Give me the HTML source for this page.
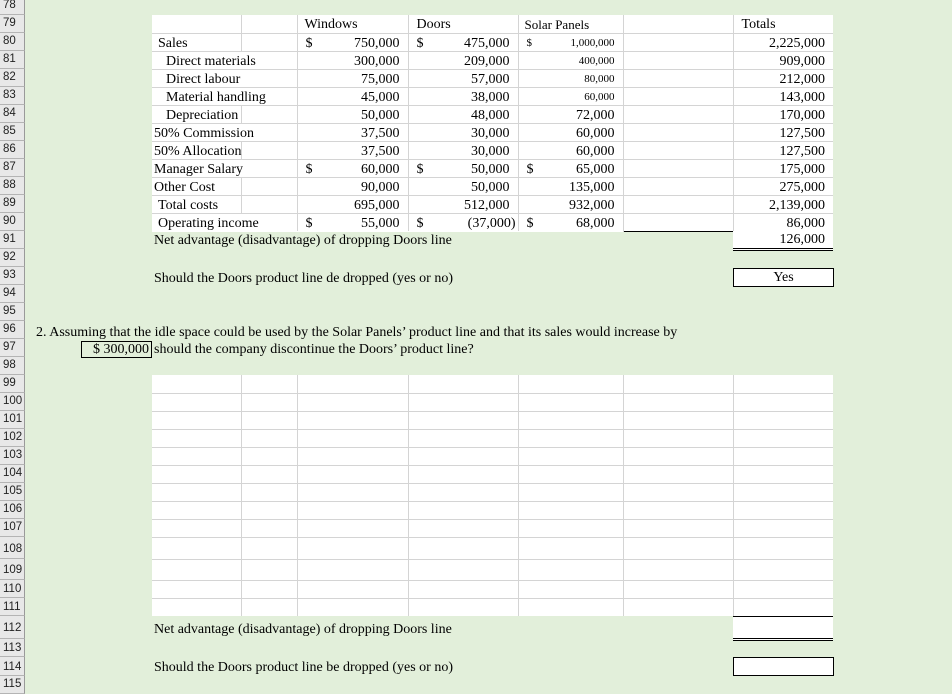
<!DOCTYPE html>
<html><head><meta charset="utf-8"><style>
*{margin:0;padding:0;box-sizing:border-box}
body{width:952px;height:685px;overflow:hidden;background:#e2efda;position:relative;font-family:"Liberation Serif",serif;font-size:14px;color:#000}
.h{position:absolute;left:0;width:25px;background:#e8e8e8;border-bottom:1px solid #b4b4b4;border-right:1px solid #9a9a9a;font-family:"Liberation Sans",sans-serif;font-size:11.5px;text-align:left;padding-left:3px;color:#222}
table{position:absolute;border-collapse:collapse;table-layout:fixed;background:#fff}
td{height:18px;border:1px solid #d4d4d4;border-top:none;white-space:nowrap;overflow:visible;padding:0;line-height:17px;position:relative}
tr td:first-child{border-left:none}
tr td:last-child{border-right:none}
.n{border-left-style:hidden}
.d{position:absolute;left:8px;top:1px}
.v{position:absolute;right:8px;top:1px}
.s{font-size:11px}
.t{position:absolute;white-space:nowrap;line-height:18px}
</style></head><body>
<div class="h" style="top:-3px;height:18px;line-height:17px">78</div>
<div class="h" style="top:15px;height:18px;line-height:17px">79</div>
<div class="h" style="top:33px;height:18px;line-height:17px">80</div>
<div class="h" style="top:51px;height:18px;line-height:17px">81</div>
<div class="h" style="top:69px;height:18px;line-height:17px">82</div>
<div class="h" style="top:87px;height:18px;line-height:17px">83</div>
<div class="h" style="top:105px;height:18px;line-height:17px">84</div>
<div class="h" style="top:123px;height:18px;line-height:17px">85</div>
<div class="h" style="top:141px;height:18px;line-height:17px">86</div>
<div class="h" style="top:159px;height:18px;line-height:17px">87</div>
<div class="h" style="top:177px;height:18px;line-height:17px">88</div>
<div class="h" style="top:195px;height:18px;line-height:17px">89</div>
<div class="h" style="top:213px;height:18px;line-height:17px">90</div>
<div class="h" style="top:231px;height:18px;line-height:17px">91</div>
<div class="h" style="top:249px;height:18px;line-height:17px">92</div>
<div class="h" style="top:267px;height:18px;line-height:17px">93</div>
<div class="h" style="top:285px;height:18px;line-height:17px">94</div>
<div class="h" style="top:303px;height:18px;line-height:17px">95</div>
<div class="h" style="top:321px;height:18px;line-height:17px">96</div>
<div class="h" style="top:339px;height:18px;line-height:17px">97</div>
<div class="h" style="top:357px;height:18px;line-height:17px">98</div>
<div class="h" style="top:375px;height:18px;line-height:17px">99</div>
<div class="h" style="top:393px;height:18px;line-height:17px">100</div>
<div class="h" style="top:411px;height:18px;line-height:17px">101</div>
<div class="h" style="top:429px;height:18px;line-height:17px">102</div>
<div class="h" style="top:447px;height:18px;line-height:17px">103</div>
<div class="h" style="top:465px;height:18px;line-height:17px">104</div>
<div class="h" style="top:483px;height:18px;line-height:17px">105</div>
<div class="h" style="top:501px;height:18px;line-height:17px">106</div>
<div class="h" style="top:519px;height:18px;line-height:17px">107</div>
<div class="h" style="top:537px;height:22px;line-height:24px">108</div>
<div class="h" style="top:559px;height:21px;line-height:23px">109</div>
<div class="h" style="top:580px;height:18px;line-height:19px">110</div>
<div class="h" style="top:598px;height:18px;line-height:19px">111</div>
<div class="h" style="top:616px;height:23px;line-height:25px">112</div>
<div class="h" style="top:639px;height:18px;line-height:19px">113</div>
<div class="h" style="top:657px;height:19px;line-height:20px">114</div>
<div class="h" style="top:676px;height:18px;line-height:17px">115</div>

<table style="left:152px;top:15px;width:681px">
<colgroup><col style="width:89px"><col style="width:56px"><col style="width:111px"><col style="width:110px"><col style="width:105px"><col style="width:110px"><col style="width:100px"></colgroup>
<tr><td></td><td></td><td><span class="d" style="left:7px">Windows</span></td><td><span class="d">Doors</span></td><td><span class="d" style="left:6px;font-size:13px">Solar Panels</span></td><td></td><td><span class="d">Totals</span></td></tr>
<tr><td><span class="d" style="left:6px">Sales</span></td><td></td><td><span class="d">$</span><span class="v">750,000</span></td><td><span class="d">$</span><span class="v">475,000</span></td><td><span class="d s">$</span><span class="v s">1,000,000</span></td><td></td><td><span class="v">2,225,000</span></td></tr>
<tr><td><span class="d" style="left:14px">Direct materials</span></td><td class="n"></td><td><span class="v">300,000</span></td><td><span class="v">209,000</span></td><td><span class="v s">400,000</span></td><td></td><td><span class="v">909,000</span></td></tr>
<tr><td><span class="d" style="left:14px">Direct labour</span></td><td class="n"></td><td><span class="v">75,000</span></td><td><span class="v">57,000</span></td><td><span class="v s">80,000</span></td><td></td><td><span class="v">212,000</span></td></tr>
<tr><td><span class="d" style="left:14px">Material handling</span></td><td class="n"></td><td><span class="v">45,000</span></td><td><span class="v">38,000</span></td><td><span class="v s">60,000</span></td><td></td><td><span class="v">143,000</span></td></tr>
<tr><td><span class="d" style="left:14px">Depreciation</span></td><td></td><td><span class="v">50,000</span></td><td><span class="v">48,000</span></td><td><span class="v">72,000</span></td><td></td><td><span class="v">170,000</span></td></tr>
<tr><td><span class="d" style="left:2px">50% Commission</span></td><td class="n"></td><td><span class="v">37,500</span></td><td><span class="v">30,000</span></td><td><span class="v">60,000</span></td><td></td><td><span class="v">127,500</span></td></tr>
<tr><td><span class="d" style="left:2px">50% Allocation</span></td><td></td><td><span class="v">37,500</span></td><td><span class="v">30,000</span></td><td><span class="v">60,000</span></td><td></td><td><span class="v">127,500</span></td></tr>
<tr><td><span class="d" style="left:2px">Manager Salary</span></td><td class="n"></td><td><span class="d">$</span><span class="v">60,000</span></td><td><span class="d">$</span><span class="v">50,000</span></td><td><span class="d">$</span><span class="v">65,000</span></td><td></td><td><span class="v">175,000</span></td></tr>
<tr><td><span class="d" style="left:2px">Other Cost</span></td><td></td><td><span class="v">90,000</span></td><td><span class="v">50,000</span></td><td><span class="v">135,000</span></td><td></td><td><span class="v">275,000</span></td></tr>
<tr><td><span class="d" style="left:6px">Total costs</span></td><td></td><td><span class="v">695,000</span></td><td><span class="v">512,000</span></td><td><span class="v">932,000</span></td><td></td><td><span class="v">2,139,000</span></td></tr>
<tr><td style="border-bottom:none"><span class="d" style="left:6px">Operating income</span></td><td class="n" style="border-bottom:none"></td><td style="border-bottom:none"><span class="d">$</span><span class="v">55,000</span></td><td style="border-bottom:none"><span class="d">$</span><span class="v" style="right:2px">(37,000)</span></td><td style="border-bottom:none"><span class="d">$</span><span class="v">68,000</span></td><td style="border-bottom:1px solid #000"></td><td style="border-bottom:1px solid #000"><span class="v">86,000</span></td></tr>
</table>
<div class="t" style="left:154px;top:232px">Net advantage (disadvantage) of dropping Doors line</div>
<div style="position:absolute;left:733px;top:231px;width:100px;height:20px;background:#fff;border-bottom:3px double #000"><span class="t" style="right:8px;top:0px">126,000</span></div>
<div class="t" style="left:154px;top:270px">Should the Doors product line de dropped (yes or no)</div>
<div style="position:absolute;left:733px;top:268px;width:101px;height:19px;background:#fff;border:1px solid #000;text-align:center;line-height:18px">Yes</div>

<div class="t" style="left:36px;top:324px">2. Assuming that the idle space could be used by the Solar Panels’ product line and that its sales would increase by</div>
<div style="position:absolute;left:81px;top:341px;width:71px;height:17px;border:1px solid #000;line-height:16px;text-align:right;padding-right:2px">$ 300,000</div>
<div class="t" style="left:154px;top:341px">should the company discontinue the Doors’ product line?</div>

<table style="left:152px;top:375px;width:681px">
<colgroup><col style="width:89px"><col style="width:56px"><col style="width:111px"><col style="width:110px"><col style="width:105px"><col style="width:110px"><col style="width:100px"></colgroup>
<tr><td></td><td></td><td></td><td></td><td></td><td></td><td></td></tr>
<tr><td></td><td></td><td></td><td></td><td></td><td></td><td></td></tr>
<tr><td></td><td></td><td></td><td></td><td></td><td></td><td></td></tr>
<tr><td></td><td></td><td></td><td></td><td></td><td></td><td></td></tr>
<tr><td></td><td></td><td></td><td></td><td></td><td></td><td></td></tr>
<tr><td></td><td></td><td></td><td></td><td></td><td></td><td></td></tr>
<tr><td></td><td></td><td></td><td></td><td></td><td></td><td></td></tr>
<tr><td></td><td></td><td></td><td></td><td></td><td></td><td></td></tr>
<tr><td></td><td></td><td></td><td></td><td></td><td></td><td></td></tr>
<tr><td style="height:22px"></td><td></td><td></td><td></td><td></td><td></td><td></td></tr>
<tr><td style="height:21px"></td><td></td><td></td><td></td><td></td><td></td><td></td></tr>
<tr><td></td><td></td><td></td><td></td><td></td><td></td><td></td></tr>
<tr><td style="border-bottom:none"></td><td style="border-bottom:none"></td><td style="border-bottom:none"></td><td style="border-bottom:none"></td><td style="border-bottom:none"></td><td style="border-bottom:none"></td><td style="border-bottom:none"></td></tr>
</table>
<div style="position:absolute;left:733px;top:616px;width:100px;height:25px;background:#fff;border-top:1px solid #000;border-bottom:3px double #000"></div>
<div class="t" style="left:154px;top:621px">Net advantage (disadvantage) of dropping Doors line</div>
<div class="t" style="left:154px;top:659px">Should the Doors product line be dropped (yes or no)</div>
<div style="position:absolute;left:733px;top:657px;width:101px;height:19px;background:#fff;border:1px solid #000"></div>
</body></html>
